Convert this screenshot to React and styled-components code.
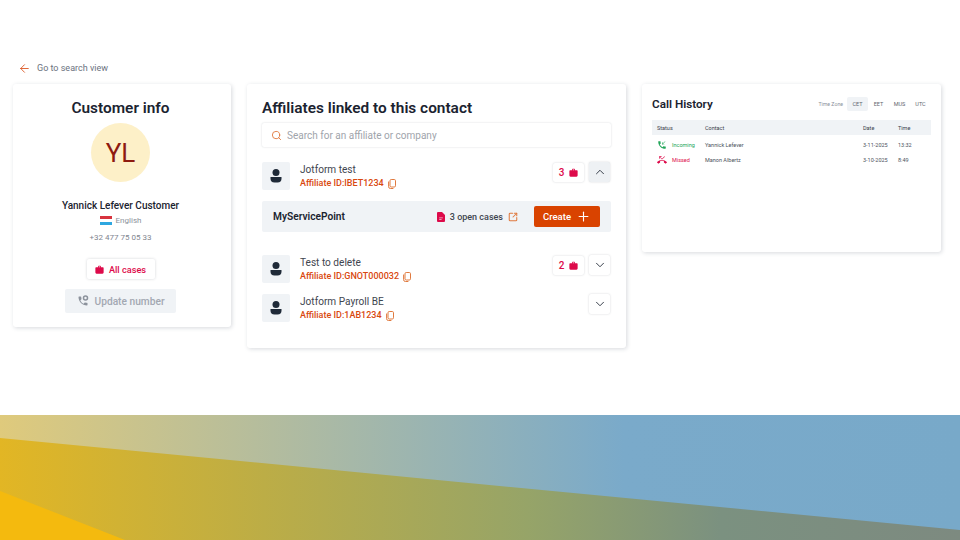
import React from 'react';
import styled, { createGlobalStyle } from 'styled-components';
import { ArrowLeft, Search, ChevronUp, ChevronDown, Plus, SquareArrowOutUpRight } from 'lucide-react';
import { MdPhoneCallback, MdPhoneMissed } from 'react-icons/md';

const GlobalStyle = createGlobalStyle`
  * { box-sizing: border-box; }
  html, body { margin: 0; background: #fff; overflow: hidden; }
  body { font-family: Roboto, "Liberation Sans", sans-serif; color: #1b2330; }
`;

const Page = styled.div`
  width: 960px;
  height: 540px;
  display: flex;
  flex-direction: column;
`;

const Top = styled.div`
  height: 415px;
  padding: 61px 0 0 13px;
`;

const BackLink = styled.div`
  display: flex;
  align-items: center;
  gap: 6px;
  padding-left: 5px;
  height: 14px;
  font-size: 9px;
  color: #6b7280;
  svg { color: #d9480f; }
`;

const Columns = styled.div`
  display: flex;
  align-items: flex-start;
  gap: 16px;
  margin-top: 9px;
`;

const Card = styled.section`
  width: ${p => p.$width}px;
  height: ${p => p.$height}px;
  background: #fff;
  border-radius: 3px;
  box-shadow: 1px 1px 4px rgba(40, 50, 70, 0.18);
`;

const InfoCard = styled(Card)`
  display: flex;
  flex-direction: column;
  align-items: center;
  padding: 15px 3px 0 0;
`;

const InfoTitle = styled.h2`
  margin: 0;
  font-size: 15.4px;
  line-height: 19px;
  font-weight: 600;
`;

const Avatar = styled.div`
  width: 59px;
  height: 59px;
  margin-top: 5px;
  border-radius: 50%;
  background: #fdf0c8;
  color: #8e1a10;
  font-size: 26px;
  display: flex;
  align-items: center;
  justify-content: center;
`;

const CustomerName = styled.div`
  margin-top: 17px;
  font-size: 10px;
  line-height: 13px;
  font-weight: 500;
`;

const Language = styled.div`
  margin-top: 3px;
  display: flex;
  align-items: center;
  gap: 4px;
  font-size: 8px;
  line-height: 11px;
  color: #8b929c;
`;

const Flag = styled.span`
  width: 12px;
  height: 9px;
  background: linear-gradient(#d8343f 0 33%, #fff 33% 66%, #2ea7e0 66%);
`;

const Phone = styled.div`
  margin-top: 6px;
  font-size: 8px;
  line-height: 11px;
  color: #7f8690;
`;

const CasesButton = styled.button`
  margin-top: 16px;
  width: 68px;
  height: 20px;
  padding: 0;
  display: flex;
  align-items: center;
  justify-content: center;
  gap: 5px;
  border: 0;
  border-radius: 2px;
  background: #fff;
  box-shadow: 0 0 3px rgba(40, 50, 70, 0.2);
  color: #dd0a4a;
  font-family: inherit;
  font-size: 9.2px;
  font-weight: 500;
`;

const UpdateButton = styled.button`
  margin-top: 10px;
  width: 111px;
  height: 24px;
  padding: 0;
  display: flex;
  align-items: center;
  justify-content: center;
  gap: 6px;
  border: 0;
  border-radius: 2px;
  background: #f0f3f6;
  color: #a3a8b2;
  font-family: inherit;
  font-size: 10.2px;
  font-weight: 500;
`;

const AffiliateCard = styled(Card)`
  padding: 14px 15px 0;
`;

const SectionTitle = styled.h2`
  margin: 0;
  font-size: 15.4px;
  line-height: 20px;
  font-weight: 600;
`;

const SearchBox = styled.div`
  margin-top: 5px;
  height: 24px;
  display: flex;
  align-items: center;
  gap: 5px;
  padding-left: 9px;
  border-radius: 2px;
  box-shadow: 0 0 2px rgba(40, 50, 70, 0.2);
  font-size: 10px;
  color: #a0a4ab;
  svg { color: #e07a3f; }
`;

const AffiliateRow = styled.div`
  height: 28px;
  margin-top: ${p => p.$top}px;
  display: flex;
  align-items: flex-start;
`;

const PersonTile = styled.div`
  width: 28px;
  height: 28px;
  border-radius: 2px;
  background: #f0f3f6;
  display: flex;
  align-items: center;
  justify-content: center;
`;

const AffiliateText = styled.div`
  margin-left: 10px;
  padding-top: 1px;
  flex: 1;
`;

const AffiliateName = styled.div`
  font-size: 10.1px;
  line-height: 14px;
  color: #3f4650;
`;

const AffiliateId = styled.div`
  display: flex;
  align-items: center;
  gap: 4px;
  font-size: 9px;
  line-height: 13px;
  font-weight: 500;
  color: #d9480f;
  svg { color: #e07a3f; }
`;

const Badge = styled.div`
  width: 31px;
  height: 19px;
  margin-top: 1px;
  display: flex;
  align-items: center;
  justify-content: center;
  gap: 5px;
  border-radius: 2px;
  box-shadow: 0 0 2px rgba(40, 50, 70, 0.22);
  color: #dd0a4a;
  font-size: 10px;
  font-weight: 500;
`;

const Toggle = styled.button`
  width: 21px;
  height: 20px;
  margin: 0 1px 0 5px;
  padding: 0;
  display: flex;
  align-items: center;
  justify-content: center;
  border: 0;
  border-radius: 2px;
  background: ${p => (p.$open ? '#eef1f4' : '#fff')};
  box-shadow: 0 0 2px rgba(40, 50, 70, 0.22);
  color: #1f2733;
`;

const ServiceRow = styled.div`
  margin-top: 11px;
  height: 31px;
  display: flex;
  align-items: center;
  padding: 0 11px;
  border-radius: 2px;
  background: #f0f3f6;
`;

const ServiceName = styled.div`
  flex: 1;
  font-size: 10.2px;
  font-weight: 600;
`;

const OpenCases = styled.div`
  display: flex;
  align-items: center;
  gap: 5px;
  font-size: 9px;
  font-weight: 500;
  color: #3f4650;
  svg:last-child { color: #e07a3f; }
`;

const CreateButton = styled.button`
  margin-left: 16px;
  width: 66px;
  height: 21px;
  padding: 0;
  display: flex;
  align-items: center;
  justify-content: center;
  gap: 5px;
  border: 0;
  border-radius: 2px;
  background: #d94300;
  color: #fff;
  font-family: inherit;
  font-size: 9.5px;
  font-weight: 500;
`;

const HistoryCard = styled(Card)`
  padding: 10px 10px 0;
`;

const HistoryHeader = styled.div`
  height: 19px;
  display: flex;
  align-items: center;
  justify-content: space-between;
`;

const HistoryTitle = styled.h3`
  margin: 0;
  font-size: 11.7px;
  font-weight: 600;
`;

const ZoneTabs = styled.div`
  display: flex;
  align-items: center;
  font-size: 5.5px;
  color: #60666f;
`;

const ZoneLabel = styled.span`
  margin-right: 4px;
  font-size: 5.2px;
  color: #8b929c;
`;

const ZoneTab = styled.span`
  width: 21px;
  height: 14px;
  display: flex;
  align-items: center;
  justify-content: center;
  border-radius: 2px;
  background: ${p => (p.$active ? '#f0f3f6' : 'transparent')};
`;

const TableGrid = styled.div`
  display: grid;
  grid-template-columns: 48px 158px 35px 1fr;
  align-items: center;
  padding-left: 5px;
  font-size: 5.5px;
  color: #4b525c;
`;

const TableHead = styled(TableGrid)`
  margin-top: 7px;
  height: 15px;
  background: #f0f3f6;
  color: #3a414b;
`;

const TableRow = styled(TableGrid)`
  height: 15px;
`;

const StatusCell = styled.span`
  display: flex;
  align-items: center;
  gap: 5px;
  color: ${p => p.$color};
  svg { font-size: 10px; }
`;

const TableBody = styled.div`
  margin-top: 2px;
`;

const Band = styled.svg`
  display: block;
  width: 960px;
  height: 125px;
`;

const BagIcon = ({ size = 9 }) => (
  <svg width={size} height={size} viewBox="0 0 12 12" fill="#dd0a4a">
    <path d="M4 3V2a1 1 0 0 1 1-1h2a1 1 0 0 1 1 1v1h2.5a1 1 0 0 1 1 1v6a1.5 1.5 0 0 1-1.5 1.5H2A1.5 1.5 0 0 1 .5 10V4a1 1 0 0 1 1-1zm1 0h2V2H5z" fillRule="evenodd" />
  </svg>
);

const PersonIcon = () => (
  <svg width="12" height="14" viewBox="0 0 12 14" fill="#1f2a38">
    <circle cx="6" cy="3.5" r="3.5" />
    <path d="M.5 8h11v1.5a4 4 0 0 1-4 4h-3a4 4 0 0 1-4-4z" />
  </svg>
);

const CopyIcon = () => (
  <svg width="8" height="10" viewBox="0 0 8 10" fill="none" stroke="currentColor" strokeWidth="1">
    <rect x="2" y="0.5" width="5.5" height="7.5" rx="1.2" />
    <path d="M.6 2.5v5.2a1.8 1.8 0 0 0 1.8 1.8h3" />
  </svg>
);

const FileIcon = () => (
  <svg width="8" height="10" viewBox="0 0 8 10" fill="#dd0a4a">
    <path d="M1 0h4l3 3v6a1 1 0 0 1-1 1H1a1 1 0 0 1-1-1V1a1 1 0 0 1 1-1z" />
    <path d="M2.2 5.5h3.6v.8H2.2zM2.2 7h2.4v.8H2.2z" fill="#f8c8d6" />
  </svg>
);

const PhoneGearIcon = () => (
  <svg width="12" height="12" viewBox="0 0 24 24" fill="#8c929c">
    <path d="M6.62 10.79c1.44 2.83 3.76 5.14 6.59 6.59l2.2-2.2c.27-.27.67-.36 1.02-.24 1.12.37 2.33.57 3.57.57.55 0 1 .45 1 1V20c0 .55-.45 1-1 1-9.39 0-17-7.61-17-17 0-.55.45-1 1-1h3.5c.55 0 1 .45 1 1 0 1.25.2 2.45.57 3.57.11.35.03.74-.25 1.02l-2.2 2.2z" />
    <circle cx="17" cy="6" r="4" fill="none" stroke="#8c929c" strokeWidth="3" />
  </svg>
);

const affiliates = [
  { name: 'Jotform test', id: 'IBET1234', count: 3, open: true, top: 15 },
  { name: 'Test to delete', id: 'GNOT000032', count: 2, top: 23 },
  { name: 'Jotform Payroll BE', id: '1AB1234', top: 11 },
];

const calls = [
  { status: 'Incoming', color: '#22a559', Icon: MdPhoneCallback, contact: 'Yannick Lefever', date: '3-11-2025', time: '13:32' },
  { status: 'Missed', color: '#dd0a4a', Icon: MdPhoneMissed, contact: 'Manon Albertz', date: '3-10-2025', time: '8:49' },
];

const Affiliate = ({ name, id, count, open, top }) => (
  <AffiliateRow $top={top}>
    <PersonTile><PersonIcon /></PersonTile>
    <AffiliateText>
      <AffiliateName>{name}</AffiliateName>
      <AffiliateId>
        Affiliate ID:{id}
        <CopyIcon />
      </AffiliateId>
    </AffiliateText>
    {count && <Badge>{count}<BagIcon /></Badge>}
    <Toggle $open={open}>
      {open ? <ChevronUp size={14} strokeWidth={1.5} /> : <ChevronDown size={14} strokeWidth={1.5} />}
    </Toggle>
  </AffiliateRow>
);

export default function App() {
  return (
    <Page>
      <GlobalStyle />
      <Top>
        <BackLink>
          <ArrowLeft size={13} strokeWidth={1.5} />
          Go to search view
        </BackLink>
        <Columns>
          <InfoCard $width={218} $height={243}>
            <InfoTitle>Customer info</InfoTitle>
            <Avatar>YL</Avatar>
            <CustomerName>Yannick Lefever Customer</CustomerName>
            <Language><Flag />English</Language>
            <Phone>+32 477 75 05 33</Phone>
            <CasesButton><BagIcon />All cases</CasesButton>
            <UpdateButton><PhoneGearIcon />Update number</UpdateButton>
          </InfoCard>

          <AffiliateCard $width={379} $height={264}>
            <SectionTitle>Affiliates linked to this contact</SectionTitle>
            <SearchBox>
              <Search size={11} />
              Search for an affiliate or company
            </SearchBox>
            <Affiliate {...affiliates[0]} />
            <ServiceRow>
              <ServiceName>MyServicePoint</ServiceName>
              <OpenCases>
                <FileIcon />
                3 open cases
                <SquareArrowOutUpRight size={10} strokeWidth={2.5} />
              </OpenCases>
              <CreateButton>Create<Plus size={15} strokeWidth={1.8} /></CreateButton>
            </ServiceRow>
            <Affiliate {...affiliates[1]} />
            <Affiliate {...affiliates[2]} />
          </AffiliateCard>

          <HistoryCard $width={299} $height={168}>
            <HistoryHeader>
              <HistoryTitle>Call History</HistoryTitle>
              <ZoneTabs>
                <ZoneLabel>Time Zone</ZoneLabel>
                <ZoneTab $active>CET</ZoneTab>
                <ZoneTab>EET</ZoneTab>
                <ZoneTab>MUS</ZoneTab>
                <ZoneTab>UTC</ZoneTab>
              </ZoneTabs>
            </HistoryHeader>
            <TableHead>
              <span>Status</span><span>Contact</span><span>Date</span><span>Time</span>
            </TableHead>
            <TableBody>
              {calls.map(({ status, color, Icon, contact, date, time }) => (
                <TableRow key={contact}>
                  <StatusCell $color={color}><Icon />{status}</StatusCell>
                  <span>{contact}</span><span>{date}</span><span>{time}</span>
                </TableRow>
              ))}
            </TableBody>
          </HistoryCard>
        </Columns>
      </Top>
      <Band viewBox="0 0 960 125" preserveAspectRatio="none">
        <defs>
          <linearGradient id="sky" x1="0" x2="1" y1="0" y2="0">
            <stop offset="0" stopColor="#dfca7c" />
            <stop offset="0.65" stopColor="#7aaaca" />
            <stop offset="1" stopColor="#78a9c9" />
          </linearGradient>
          <linearGradient id="field" x1="0" x2="1" y1="0" y2="0">
            <stop offset="0" stopColor="#e2b624" />
            <stop offset="0.55" stopColor="#96a468" />
            <stop offset="0.75" stopColor="#7b9180" />
            <stop offset="1" stopColor="#7d8a80" />
          </linearGradient>
        </defs>
        <rect width="960" height="125" fill="url(#sky)" />
        <polygon points="0,23 960,115 960,125 0,125" fill="url(#field)" />
        <polygon points="0,76 125,125 0,125" fill="#f4ba0e" />
      </Band>
    </Page>
  );
}
